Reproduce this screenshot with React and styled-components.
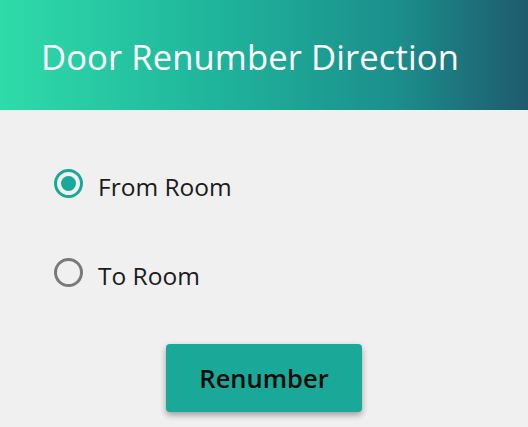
import React, { useState } from "react";
import styled, { createGlobalStyle } from "styled-components";

const GlobalStyle = createGlobalStyle`
  html, body {
    margin: 0;
    padding: 0;
    background: #f0f0f0;
  }
  body {
    font-family: "Open Sans", "Noto Sans", sans-serif;
  }
`;

const Page = styled.div`
  width: 528px;
  height: 427px;
  overflow: hidden;
  background: #f0f0f0;
  display: flex;
  flex-direction: column;
`;

const Header = styled.div`
  height: 110px;
  display: flex;
  align-items: center;
  padding-left: 41px;
  background: linear-gradient(90deg, #2fdba9 0%, #1fb59c 40%, #1b8f8c 75%, #1f5a6d 100%);
`;

const Title = styled.h1`
  margin: 0;
  padding-top: 3px;
  color: #ffffff;
  font-size: 34.6px;
  font-weight: 400;
  letter-spacing: 0.1px;
`;

const Options = styled.div`
  display: flex;
  flex-direction: column;
  gap: 60px;
  padding: 59px 0 0 54px;
`;

const Option = styled.label`
  display: flex;
  align-items: center;
  gap: 15px;
  height: 29px;
  cursor: pointer;
  color: #1b1b1b;
  font-size: 24.5px;
`;

const Label = styled.span`
  padding-top: 5px;
`;

const Circle = styled.span`
  box-sizing: border-box;
  width: 29px;
  height: 29px;
  border-radius: 50%;
  border: 3px solid ${(p) => (p.$on ? "#1aa898" : "#7a7a7a")};
  display: flex;
  align-items: center;
  justify-content: center;

  &::after {
    content: "";
    display: ${(p) => (p.$on ? "block" : "none")};
    width: 15px;
    height: 15px;
    border-radius: 50%;
    background: #1aa898;
  }
`;

const Footer = styled.div`
  display: flex;
  justify-content: center;
  padding-top: 57px;
`;

const Button = styled.button`
  width: 196px;
  height: 68px;
  border: none;
  border-radius: 4px;
  background: #1aa898;
  color: #0a0a0a;
  font-family: "Open Sans", "Noto Sans", sans-serif;
  font-size: 25.5px;
  font-weight: 600;
  box-shadow: 0 3px 6px rgba(0, 0, 0, 0.35);
  cursor: pointer;
`;

const options = ["From Room", "To Room"];

const App = () => {
  const [picked, setPicked] = useState("From Room");
  return (
    <Page>
      <GlobalStyle />
      <Header>
        <Title>Door Renumber Direction</Title>
      </Header>
      <Options>
        {options.map((o) => (
          <Option key={o} onClick={() => setPicked(o)}>
            <Circle $on={picked === o} />
            <Label>{o}</Label>
          </Option>
        ))}
      </Options>
      <Footer>
        <Button>Renumber</Button>
      </Footer>
    </Page>
  );
};

export default App;
